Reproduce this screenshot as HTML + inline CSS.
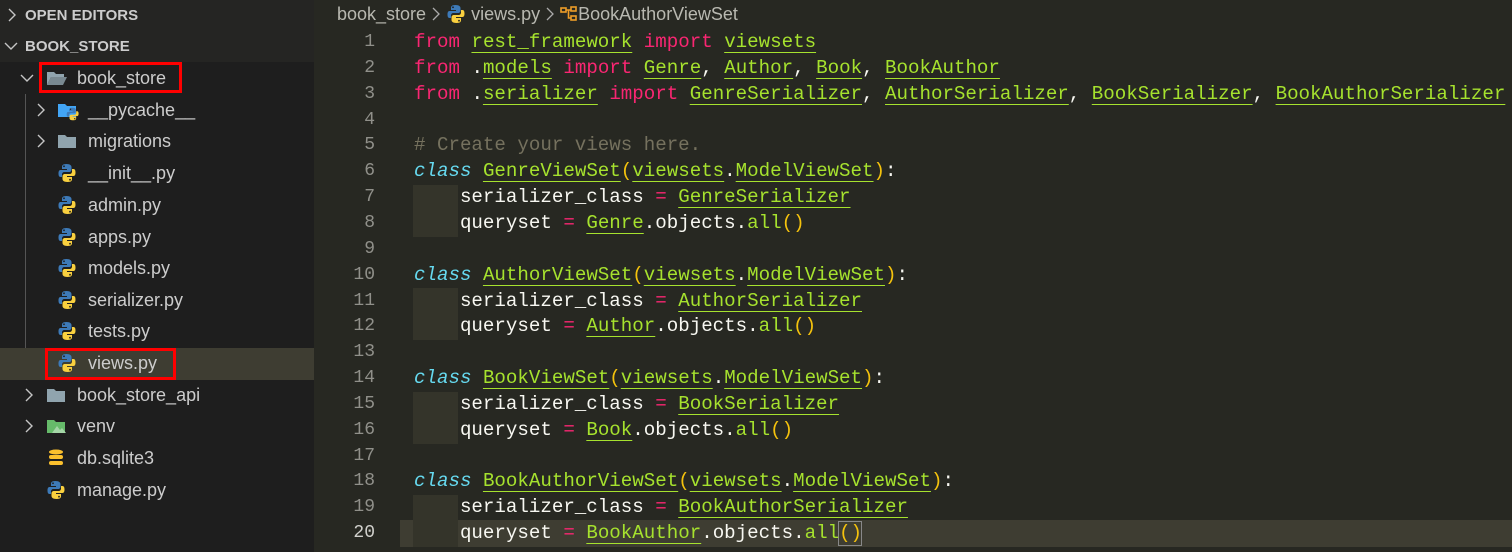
<!DOCTYPE html>
<html><head><meta charset="utf-8"><style>
*{margin:0;padding:0;box-sizing:border-box}
body{width:1512px;height:552px;overflow:hidden;background:#272822;position:relative;font-family:"Liberation Sans",sans-serif}
#side{position:absolute;left:0;top:0;width:314px;height:552px;background:#1e1e1e}
#sidehead{position:absolute;left:0;top:0;width:314px;height:62px;background:#252523}
.h{position:absolute;left:25px;font-weight:bold;font-size:15px;color:#cccccc}
.row{position:absolute;left:0;width:314px;height:32px;font-size:18px;color:#cccccc;line-height:32px;white-space:nowrap}
.row svg{position:absolute}
.row span{position:absolute}
.cv{position:absolute}
#guide{position:absolute;left:25px;top:94px;width:1px;height:286px;background:#555}
#code{position:absolute;left:0;top:29px;width:1512px}
.l{position:absolute;left:414px;height:26px;line-height:26px;font-family:"Liberation Mono",monospace;font-size:19.15px;color:#f8f8f2;white-space:pre}
.n{position:absolute;width:375px;text-align:right;height:26px;line-height:26px;font-family:"Liberation Mono",monospace;font-size:18px;color:#90908a}
.k{color:#f92672}.c{color:#66d9ef;font-style:italic}.g{color:#a6e22e;text-decoration:underline;text-underline-offset:5px;text-decoration-thickness:1px}.gn{color:#a6e22e}.cm{color:#75715e}.p{color:#f4c20d}
.ind{position:absolute;left:413px;width:45px;height:52px;background:#34342a}
</style></head><body>
<div id="side">
<div id="sidehead"></div>
<svg class="cv" style="left:6px;top:8px" width="12" height="14" viewBox="0 0 12 14"><path d="M3 1l6 6-6 6" fill="none" stroke="#c5c5c5" stroke-width="1.4"/></svg>
<div class="h" style="top:7px">OPEN EDITORS</div>
<svg class="cv" style="left:4px;top:40px" width="14" height="12" viewBox="0 0 14 12"><path d="M1 3l6 6 6-6" fill="none" stroke="#c5c5c5" stroke-width="1.4"/></svg>
<div class="h" style="top:38px">BOOK_STORE</div>
<div id="guide"></div>
<div class="row" style="top:348px;background:#3e3d32"></div>
</div>
<svg width="0" height="0" style="position:absolute"><defs>
<g id="py"><path d="M9 1C5 1 4.5 2.5 4.5 4V6H9.5V7H3C1.5 7 1 8.5 1 10.5S1.5 14 3 14H4.5V11.5C4.5 10 5.5 9 7 9H11.5C13 9 14 8 14 6.5V4C14 2.5 12.5 1 9 1Z" fill="#3d7ab8"/><circle cx="6.5" cy="3.3" r="0.9" fill="#1e1e1e"/><path d="M10 19C14 19 14.5 17.5 14.5 16V14H9.5V13H16C17.5 13 18 11.5 18 9.5S17.5 6 16 6H14.5V8.5C14.5 10 13.5 11 12 11H7.5C6 11 5 12 5 13.5V16C5 17.5 6.5 19 10 19Z" fill="#f9d03f"/><circle cx="12.5" cy="16.7" r="0.9" fill="#1e1e1e"/></g>
</defs></svg>
<div id="rows"></div>
<script>
var items=[
[78,'chevd',40,'folderopen',77,'book_store'],
[110,'chev',40,'pyfolder',88,'__pycache__'],
[141,'chev',40,'folder',88,'migrations'],
[173,'',0,'py',88,'__init__.py'],
[205,'',0,'py',88,'admin.py'],
[237,'',0,'py',88,'apps.py'],
[268,'',0,'py',88,'models.py'],
[300,'',0,'py',88,'serializer.py'],
[331,'',0,'py',88,'tests.py'],
[363,'',0,'py',88,'views.py'],
[395,'chev',28,'folder',77,'book_store_api'],
[426,'chev',28,'venv',77,'venv'],
[458,'',0,'db',77,'db.sqlite3'],
[490,'',0,'py',77,'manage.py']];
var h='';
items.forEach(function(it){
 var y=it[0]-16, ix=it[4]-31;
 h+='<div class="row" style="top:'+y+'px">';
 if(it[1]=='chev')h+='<svg style="left:'+(it[2]-4)+'px;top:9px" width="10" height="14" viewBox="0 0 10 14"><path d="M2 1l6 6-6 6" fill="none" stroke="#c5c5c5" stroke-width="1.4"/></svg>';
 if(it[1]=='chevd')h+='<svg style="left:'+(it[2]-20)+'px;top:11px" width="14" height="10" viewBox="0 0 14 10"><path d="M1 2l6 6 6-6" fill="none" stroke="#c5c5c5" stroke-width="1.4"/></svg>';
 var ic=it[3];
 if(ic=='py')h+='<svg style="left:'+ix+'px;top:6px" width="20" height="20" viewBox="0 0 19 20"><use href="#py"/></svg>';
 if(ic=='folder')h+='<svg style="left:'+ix+'px;top:7px" width="20" height="18" viewBox="0 0 20 18"><path d="M1 3h7l2 2h9v11H1z" fill="#90a4ae"/></svg>';
 if(ic=='folderopen')h+='<svg style="left:'+ix+'px;top:7px" width="22" height="18" viewBox="0 0 22 18"><path d="M1 3h7l2 2h8v3H5L1 16z" fill="#90a4ae"/><path d="M5 8h16l-4 8H1z" fill="#90a4ae" opacity=".8"/></svg>';
 if(ic=='pyfolder')h+='<svg style="left:'+ix+'px;top:7px" width="22" height="20" viewBox="0 0 22 20"><path d="M1 3h7l2 2h9v11H1z" fill="#42a5f5"/><g transform="translate(9,6) scale(.7)"><use href="#py"/></g></svg>';
 if(ic=='venv')h+='<svg style="left:'+ix+'px;top:7px" width="22" height="18" viewBox="0 0 22 18"><path d="M1 3h7l2 2h9v11H1z" fill="#66bb6a"/><path d="M6 16l5-7 3 4 2-2 4 5z" fill="#a5d6a7"/></svg>';
 if(ic=='db')h+='<svg style="left:'+ix+'px;top:6px" width="20" height="20" viewBox="0 0 20 20"><ellipse cx="10" cy="4" rx="7" ry="2.5" fill="#fbc02d"/><rect x="3" y="7" width="14" height="4" rx="2" fill="#fbc02d"/><rect x="3" y="13" width="14" height="4" rx="2" fill="#fbc02d"/></svg>';
 h+='<span style="left:'+it[4]+'px;top:0">'+it[5]+'</span></div>';
});
document.getElementById('rows').innerHTML=h;
</script>
<div style="position:absolute;left:39px;top:62px;width:143px;height:31px;border:3px solid #ff0000"></div>
<div style="position:absolute;left:45px;top:348px;width:131px;height:32px;border:3px solid #ff0000"></div>

<div style="position:absolute;left:337px;top:4px;font-size:18px;color:#b8b8b0;white-space:nowrap">book_store <svg width="10" height="14" viewBox="0 0 10 14" style="vertical-align:-1px"><path d="M2 1l6 6-6 6" fill="none" stroke="#aaa" stroke-width="1.3"/></svg>
<svg width="20" height="20" viewBox="0 0 19 20" style="vertical-align:-4px"><use href="#py"/></svg> views.py <svg width="10" height="14" viewBox="0 0 10 14" style="vertical-align:-1px"><path d="M2 1l6 6-6 6" fill="none" stroke="#aaa" stroke-width="1.3"/></svg>
<svg width="18" height="16" viewBox="0 0 18 16" style="vertical-align:-2px"><g fill="none" stroke="#ee9d28" stroke-width="1.6"><rect x="1" y="2" width="5" height="4"/><rect x="11" y="1" width="5" height="4"/><rect x="11" y="10" width="5" height="4"/><path d="M6 4h5M8.5 4v8H11"/></g></svg>BookAuthorViewSet</div>

<div style="position:absolute;left:400px;top:520px;width:1112px;height:27px;background:#3e3d32"></div>
<div class="ind" style="top:185px"></div>
<div class="ind" style="top:288px"></div>
<div class="ind" style="top:392px"></div>
<div class="ind" style="top:495px"></div>
<div style="position:absolute;left:838px;top:521px;width:24px;height:25px;border:1px solid #888"></div>
<div id="code"></div>
<script>
var L=[
'<span class="k">from</span> <span class="g">rest_framework</span> <span class="k">import</span> <span class="g">viewsets</span>',
'<span class="k">from</span> .<span class="g">models</span> <span class="k">import</span> <span class="g">Genre</span>, <span class="g">Author</span>, <span class="g">Book</span>, <span class="g">BookAuthor</span>',
'<span class="k">from</span> .<span class="g">serializer</span> <span class="k">import</span> <span class="g">GenreSerializer</span>, <span class="g">AuthorSerializer</span>, <span class="g">BookSerializer</span>, <span class="g">BookAuthorSerializer</span>',
'',
'<span class="cm"># Create your views here.</span>',
'<span class="c">class</span> <span class="g">GenreViewSet</span><span class="p">(</span><span class="g">viewsets</span>.<span class="g">ModelViewSet</span><span class="p">)</span>:',
'    serializer_class <span class="k">=</span> <span class="g">GenreSerializer</span>',
'    queryset <span class="k">=</span> <span class="g">Genre</span>.objects.<span class="gn">all</span><span class="p">()</span>',
'',
'<span class="c">class</span> <span class="g">AuthorViewSet</span><span class="p">(</span><span class="g">viewsets</span>.<span class="g">ModelViewSet</span><span class="p">)</span>:',
'    serializer_class <span class="k">=</span> <span class="g">AuthorSerializer</span>',
'    queryset <span class="k">=</span> <span class="g">Author</span>.objects.<span class="gn">all</span><span class="p">()</span>',
'',
'<span class="c">class</span> <span class="g">BookViewSet</span><span class="p">(</span><span class="g">viewsets</span>.<span class="g">ModelViewSet</span><span class="p">)</span>:',
'    serializer_class <span class="k">=</span> <span class="g">BookSerializer</span>',
'    queryset <span class="k">=</span> <span class="g">Book</span>.objects.<span class="gn">all</span><span class="p">()</span>',
'',
'<span class="c">class</span> <span class="g">BookAuthorViewSet</span><span class="p">(</span><span class="g">viewsets</span>.<span class="g">ModelViewSet</span><span class="p">)</span>:',
'    serializer_class <span class="k">=</span> <span class="g">BookAuthorSerializer</span>',
'    queryset <span class="k">=</span> <span class="g">BookAuthor</span>.objects.<span class="gn">all</span><span class="p">()</span>'];
var s='';
L.forEach(function(t,i){var y=(i*25.85).toFixed(2);
s+='<div class="n" style="top:'+y+'px;'+(i==19?'color:#d0d0cc':'')+'">'+(i+1)+'</div><div class="l" style="top:'+y+'px">'+t+'</div>';});
document.getElementById('code').innerHTML=s;
</script>
</body></html>
